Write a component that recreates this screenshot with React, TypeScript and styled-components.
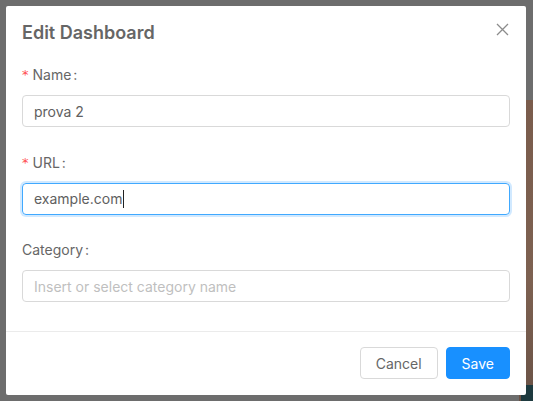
import React from "react";
import styled, { createGlobalStyle } from "styled-components";

const Global = createGlobalStyle`
  html, body { margin: 0; padding: 0; }
  body {
    width: 533px;
    height: 401px;
    overflow: hidden;
    background: #6d6d6d;
    font-family: Inter, "Noto Sans", sans-serif;
  }
`;

const Page = styled.div`
  position: relative;
  width: 533px;
  height: 401px;
  background: #6d6d6d;
  overflow: hidden;
`;

const Backdrop = styled.div`
  position: absolute;
  right: 0;
  top: 100px;
  width: 14px;
  height: 301px;
  background: linear-gradient(180deg, #7a5c4c 0%, #7d6151 60%, #6a5246 100%);
`;

const BackdropFoot = styled.div`
  position: absolute;
  right: 0;
  bottom: 0;
  width: 12px;
  height: 16px;
  background: #1e3a3f;
`;

const Modal = styled.div`
  position: absolute;
  left: 6px;
  top: 6px;
  width: 520px;
  height: 389px;
  background: #ffffff;
  border-radius: 2px;
  display: flex;
  flex-direction: column;
`;

const Header = styled.div`
  display: flex;
  align-items: flex-start;
  justify-content: space-between;
  padding: 16px 16px 0 16px;
  height: 22px;
`;

const Title = styled.div`
  font-size: 18px;
  font-weight: 600;
  line-height: 22px;
  color: #666666;
`;

const Close = styled.button`
  border: none;
  background: none;
  padding: 0;
  margin-top: -1px;
  width: 16px;
  height: 16px;
  display: flex;
  align-items: center;
  justify-content: center;
  cursor: pointer;
`;

const Body = styled.div`
  padding: 19px 16px 0 16px;
  display: flex;
  flex-direction: column;
`;

const Item = styled.div`
  display: flex;
  flex-direction: column;
  margin-bottom: 23.5px;
`;

const Label = styled.div`
  font-size: 14px;
  line-height: 24px;
  height: 24px;
  color: #666666;
  margin-bottom: 8px;
  display: flex;
  align-items: center;
`;

const Star = styled.span`
  color: #ff4d4f;
  font-size: 13px;
  margin-right: 4px;
  font-family: SimSun, "DejaVu Sans", sans-serif;
`;

const Colon = styled.span`
  margin-left: 2px;
`;

const Field = styled.div<{ $focused?: boolean }>`
  box-sizing: border-box;
  height: 32px;
  width: 488px;
  border: 1px solid ${(p) => (p.$focused ? "#40a9ff" : "#d9d9d9")};
  border-radius: 4px;
  box-shadow: ${(p) => (p.$focused ? "0 0 0 2px rgba(24,144,255,0.2)" : "none")};
  padding: 0 11px;
  display: flex;
  align-items: center;
  font-size: 14px;
  color: #606060;
`;

const Placeholder = styled.span`
  color: #bfbfbf;
`;

const Caret = styled.span`
  display: inline-block;
  width: 1px;
  height: 18px;
  background: #222;
  margin-left: 1px;
`;

const Divider = styled.div`
  height: 1px;
  background: #ebebeb;
  margin-top: 5px;
`;

const Footer = styled.div`
  display: flex;
  justify-content: flex-end;
  gap: 8px;
  padding: 16px 16px 16px 16px;
`;

const Button = styled.button<{ $primary?: boolean }>`
  box-sizing: border-box;
  height: 32px;
  padding: 0 15px;
  border-radius: 4px;
  font-family: Inter, "Noto Sans", sans-serif;
  font-size: 14px;
  border: 1px solid ${(p) => (p.$primary ? "#1890ff" : "#d9d9d9")};
  background: ${(p) => (p.$primary ? "#1890ff" : "#ffffff")};
  color: ${(p) => (p.$primary ? "#ffffff" : "#666666")};
  cursor: pointer;
`;

export default function App() {
  return (
    <Page>
      <Global />
      <Backdrop />
      <BackdropFoot />
      <Modal>
        <Header>
          <Title>Edit Dashboard</Title>
          <Close aria-label="Close">
            <svg width="13" height="13" viewBox="0 0 13 13">
              <path d="M1 1 L12 12 M12 1 L1 12" stroke="#8c8c8c" strokeWidth="1.3" fill="none" />
            </svg>
          </Close>
        </Header>
        <Body>
          <Item>
            <Label>
              <Star>*</Star>Name<Colon>:</Colon>
            </Label>
            <Field>prova 2</Field>
          </Item>
          <Item>
            <Label>
              <Star>*</Star>URL<Colon>:</Colon>
            </Label>
            <Field $focused>
              example.com<Caret />
            </Field>
          </Item>
          <Item>
            <Label>
              Category<Colon>:</Colon>
            </Label>
            <Field>
              <Placeholder>Insert or select category name</Placeholder>
            </Field>
          </Item>
        </Body>
        <Divider />
        <Footer>
          <Button>Cancel</Button>
          <Button $primary>Save</Button>
        </Footer>
      </Modal>
    </Page>
  );
}
